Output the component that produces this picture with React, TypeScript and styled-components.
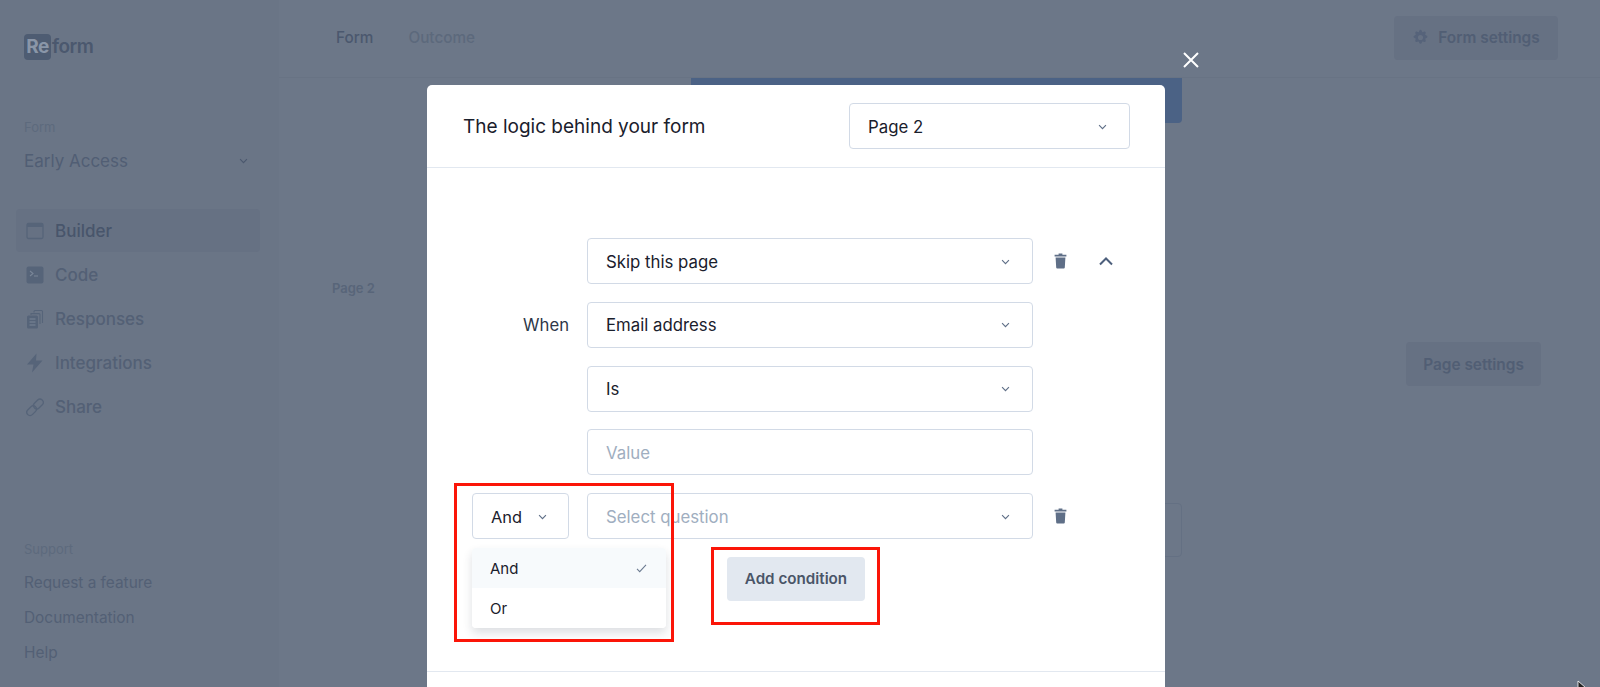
import React from 'react';
import styled, { createGlobalStyle } from 'styled-components';

const GlobalStyle = createGlobalStyle`
  html, body {
    margin: 0;
    padding: 0;
    height: 100%;
    overflow: hidden;
    background: #6c7788;
    font-family: Inter, "Liberation Sans", sans-serif;
  }
  * { box-sizing: border-box; }
`;

const Shell = styled.div`
  display: flex;
  width: 1600px;
  height: 687px;
  overflow: hidden;
  color: #4b586e;
`;

const Sidebar = styled.aside`
  display: flex;
  flex-direction: column;
  width: 279px;
  height: 687px;
  padding: 33px 19px 0 16px;
  background: #6a7586;
`;

const Logo = styled.div`
  display: flex;
  align-items: center;
  height: 27px;
  margin-left: 8px;
  font-size: 19px;
  font-weight: 600;
  letter-spacing: -0.5px;
  color: #4b586e;
`;

const LogoMark = styled.span`
  display: flex;
  align-items: center;
  justify-content: center;
  width: 27px;
  height: 26px;
  margin-right: 1px;
  border-radius: 4px;
  background: #4e5c72;
  color: #8a96a8;
  font-weight: 700;
`;

const SideLabel = styled.div<{ $top: number; $bottom?: number }>`
  margin: ${(p) => p.$top}px 0 ${(p) => p.$bottom ?? 0}px 8px;
  font-size: 13px;
  line-height: 16px;
  color: #5d6a7d;
`;

const FormPicker = styled.div`
  display: flex;
  align-items: center;
  justify-content: space-between;
  height: 24px;
  margin: 14px 12px 0 8px;
  font-size: 17px;
  color: #515e74;
`;

const NavList = styled.nav`
  display: flex;
  flex-direction: column;
  gap: 1px;
  margin-top: 36px;
`;

const NavItem = styled.div<{ $active?: boolean }>`
  display: flex;
  align-items: center;
  gap: 11px;
  height: 43px;
  padding-left: 10px;
  border-radius: 4px;
  font-size: 17px;
  font-weight: 500;
  background: ${(p) => (p.$active ? '#667183' : 'transparent')};
  color: ${(p) => (p.$active ? '#48556b' : '#536075')};
`;

const NavIcon = styled.svg`
  flex: none;
  width: 18px;
  height: 20px;
  color: #566479;
`;

const SupportBlock = styled.div`
  display: flex;
  flex-direction: column;
  margin-top: auto;
  padding-bottom: 17px;
`;

const SupportLink = styled.div`
  height: 35px;
  margin-left: 8px;
  font-size: 15.4px;
  line-height: 35px;
  color: #536075;
`;

const Main = styled.main`
  flex: 1;
  display: flex;
  flex-direction: column;
  min-width: 0;
`;

const TopBar = styled.header`
  display: flex;
  align-items: center;
  gap: 35px;
  height: 78px;
  padding: 0 42px 2px 57px;
  border-bottom: 1px solid #687384;
  font-size: 15.3px;
  font-weight: 500;
`;

const Tab = styled.span<{ $muted?: boolean }>`
  color: ${(p) => (p.$muted ? '#5c697c' : '#4b586e')};
`;

const GhostButton = styled.div`
  display: flex;
  align-items: center;
  justify-content: center;
  gap: 9px;
  height: 44px;
  border-radius: 4px;
  background: #667183;
  color: #515e74;
  font-size: 15.4px;
  font-weight: 600;
`;

const FormSettings = styled(GhostButton)`
  width: 164px;
  margin-left: auto;
`;

const Canvas = styled.section`
  display: flex;
  flex-direction: column;
  padding: 0 59px 0 53px;
`;

const BlueBar = styled.div`
  width: 491px;
  height: 45px;
  margin-left: 359px;
  border-radius: 0 0 4px 4px;
  background: #4b6285;
`;

const PageRow = styled.div`
  display: flex;
  align-items: flex-start;
  justify-content: space-between;
  margin-top: 156px;
`;

const PageLabel = styled.div`
  font-size: 13px;
  font-weight: 600;
  line-height: 18px;
  color: #586579;
`;

const PageSettings = styled(GhostButton)`
  width: 135px;
  margin-top: 63px;
`;

const OutlineBox = styled.div`
  width: 491px;
  height: 54px;
  margin: 117px 0 0 359px;
  border: 1px solid #647083;
  border-radius: 4px;
`;

const Overlay = styled.div`
  position: fixed;
  inset: 0;
  display: flex;
  justify-content: center;
  padding: 85px 8px 0 0;
  overflow: hidden;
`;

const Modal = styled.div`
  position: relative;
  width: 738px;
  height: 640px;
  border-radius: 5px 5px 0 0;
  background: #fff;
  color: #1a202c;
`;

const CloseButton = styled.svg`
  position: absolute;
  top: -33px;
  right: -34px;
  width: 16px;
  height: 16px;
  color: #fff;
`;

const ModalHeader = styled.div`
  display: flex;
  align-items: center;
  justify-content: space-between;
  height: 83px;
  padding: 0 35px 0 36px;
  border-bottom: 1px solid #e2e8f0;
`;

const Title = styled.h2`
  margin: 0;
  padding-top: 1px;
  font-size: 19px;
  font-weight: 400;
  color: #1a202c;
`;

const Select = styled.div<{ $placeholder?: boolean; $width?: number }>`
  display: flex;
  align-items: center;
  justify-content: space-between;
  width: ${(p) => (p.$width ? `${p.$width}px` : '100%')};
  height: 46px;
  padding: 1px 22px 0 18px;
  border: 1px solid #d2dae6;
  border-radius: 4px;
  background: #fff;
  font-size: 16.8px;
  color: ${(p) => (p.$placeholder ? '#a0aec0' : '#1a202c')};
`;

const Chevron = styled.svg<{ $tone?: string }>`
  flex: none;
  width: 9px;
  height: 6px;
  color: ${(p) => p.$tone ?? '#5f6f87'};
`;

const RuleGrid = styled.div`
  display: grid;
  grid-template-columns: 97px 446px auto;
  column-gap: 18px;
  row-gap: 17.75px;
  align-items: center;
  margin: 70px 0 0 45px;
`;

const WhenLabel = styled.div`
  padding-top: 1px;
  text-align: right;
  font-size: 16.7px;
  color: #2d3748;
`;

const Actions = styled.div`
  display: flex;
  align-items: center;
  gap: 32px;
  padding-left: 3px;
`;

const TrashIcon = styled.svg`
  width: 13px;
  height: 16px;
  color: #5f6f87;
`;

const CollapseIcon = styled.svg`
  width: 14px;
  height: 9px;
  color: #4d5f7c;
`;

const ConjunctionWrap = styled.div`
  position: relative;
`;

const ConjunctionSelect = styled(Select)`
  gap: 12px;
  padding-right: 21px;
  font-size: 16.4px;
`;

const Menu = styled.div`
  position: absolute;
  top: 55px;
  left: 0;
  z-index: 2;
  width: 194px;
  border-radius: 4px;
  background: #fff;
  box-shadow: 0 5px 10px rgba(45, 55, 72, 0.16);
`;

const MenuItem = styled.div<{ $selected?: boolean }>`
  display: flex;
  align-items: center;
  justify-content: space-between;
  height: 40px;
  padding: 0 19px 0 18px;
  border-radius: ${(p) => (p.$selected ? '4px 4px 0 0' : '0 0 4px 4px')};
  background: ${(p) => (p.$selected ? '#f7fafc' : '#fff')};
  font-size: 15px;
  color: #1a202c;
`;

const Check = styled.svg`
  width: 11px;
  height: 9px;
  color: #6b7a90;
`;

const AddRow = styled.div`
  display: flex;
  margin: 17.5px 0 0 300px;
`;

const AddButton = styled.div`
  display: flex;
  align-items: center;
  justify-content: center;
  width: 138px;
  height: 44px;
  border-radius: 4px;
  background: #e2e8f0;
  color: #4a5568;
  font-size: 15.2px;
  font-weight: 600;
`;

const FooterRule = styled.div`
  height: 1px;
  margin-top: 70px;
  background: #e2e8f0;
`;

const Callout = styled.div<{ $left: number; $top: number; $w: number; $h: number }>`
  position: absolute;
  z-index: 3;
  left: ${(p) => p.$left}px;
  top: ${(p) => p.$top}px;
  width: ${(p) => p.$w}px;
  height: ${(p) => p.$h}px;
  border: 3px solid #fb1508;
  pointer-events: none;
`;

const Pointer = styled.svg`
  position: fixed;
  left: 1577px;
  top: 680px;
  width: 10px;
  height: 14px;
`;

const Caret = ({ tone }: { tone?: string }) => (
  <Chevron $tone={tone} viewBox="0 0 10 7" fill="none" stroke="currentColor" strokeWidth="1.3">
    <path d="M1 1.2 5 5.4 9 1.2" />
  </Chevron>
);

const Trash = () => (
  <TrashIcon viewBox="0 0 13 16" fill="currentColor">
    <path d="M4.6 0.6h3.8v1.2h4v1.7H0.6V1.8h4z" />
    <path d="M1.6 4.6h9.8l-.6 10a1 1 0 0 1-1 .9H3.2a1 1 0 0 1-1-.9z" />
  </TrashIcon>
);

const navItems = [
  {
    label: 'Builder',
    icon: (
      <>
        <rect x="1" y="2.5" width="16" height="15" rx="1.5" fill="none" stroke="currentColor" strokeWidth="1.3" />
        <path d="M1 3.5a1 1 0 0 1 1-1h14a1 1 0 0 1 1 1v2.5H1z" fill="currentColor" />
      </>
    ),
  },
  {
    label: 'Code',
    icon: (
      <>
        <rect x="0.5" y="1.5" width="17" height="17" rx="2" fill="currentColor" />
        <path d="M4 6l3 2.5L4 11M8 11h4" fill="none" stroke="#7a8698" strokeWidth="1.1" />
      </>
    ),
  },
  {
    label: 'Responses',
    icon: (
      <>
        <path d="M8 3.5V2.5a1 1 0 0 1 1-1h6.5a1 1 0 0 1 1 1V14" fill="none" stroke="currentColor" strokeWidth="1.1" />
        <path d="M5 6V4.6h8a1 1 0 0 1 1 1V15" fill="none" stroke="currentColor" strokeWidth="1.1" />
        <rect x="1" y="6.5" width="11" height="13" rx="1.5" fill="currentColor" />
        <path d="M3.5 10h6M3.5 13h6M3.5 16h6" stroke="#7a8698" strokeWidth="1" />
      </>
    ),
  },
  {
    label: 'Integrations',
    icon: <path d="M10.5 0.5 1 11.5h6.5L6 19.5l10.5-12H10z" fill="currentColor" />,
  },
  {
    label: 'Share',
    icon: (
      <g fill="none" stroke="currentColor" strokeWidth="1.3" transform="rotate(-45 9 10)">
        <rect x="-1.5" y="7" width="11" height="6.5" rx="3.2" />
        <rect x="8" y="7" width="11" height="6.5" rx="3.2" />
      </g>
    ),
  },
];

const App = () => (
  <>
    <GlobalStyle />
    <Shell>
      <Sidebar>
        <Logo>
          <LogoMark>Re</LogoMark>
          form
        </Logo>
        <SideLabel $top={59}>Form</SideLabel>
        <FormPicker>
          Early Access
          <Caret tone="#4b586e" />
        </FormPicker>
        <NavList>
          {navItems.map((item, i) => (
            <NavItem key={item.label} $active={i === 0}>
              <NavIcon viewBox="0 0 18 20">{item.icon}</NavIcon>
              {item.label}
            </NavItem>
          ))}
        </NavList>
        <SupportBlock>
          <SideLabel $top={0} $bottom={8}>Support</SideLabel>
          <SupportLink>Request a feature</SupportLink>
          <SupportLink>Documentation</SupportLink>
          <SupportLink>Help</SupportLink>
        </SupportBlock>
      </Sidebar>
      <Main>
        <TopBar>
          <Tab>Form</Tab>
          <Tab $muted>Outcome</Tab>
          <FormSettings>
            <svg width="17" height="17" viewBox="0 0 20 20" fill="#56637a">
              <path
                fillRule="evenodd"
                d="M11.5 1.3c-.4-1.700-2.600-1.700-3 0a1.500 1.500 0 0 1-2.300 1c-1.500-1-3 .6-2.100 2.100a1.500 1.500 0 0 1-1 2.300c-1.700.4-1.700 2.600 0 3a1.500 1.500 0 0 1 1 2.300c-1 1.500.6 3 2.100 2.100a1.500 1.500 0 0 1 2.300 1c.4 1.700 2.600 1.700 3 0a1.500 1.500 0 0 1 2.300-1c1.500 1 3-.6 2.100-2.100a1.500 1.500 0 0 1 1-2.300c1.700-.4 1.700-2.600 0-3a1.500 1.500 0 0 1-1-2.300c1-1.500-.6-3-2.100-2.100a1.500 1.500 0 0 1-2.300-1zM10 12a3 3 0 1 0 0-6 3 3 0 0 0 0 6z"
                transform="translate(0 1)"
              />
            </svg>
            Form settings
          </FormSettings>
        </TopBar>
        <Canvas>
          <BlueBar />
          <PageRow>
            <PageLabel>Page 2</PageLabel>
            <PageSettings>Page settings</PageSettings>
          </PageRow>
          <OutlineBox />
        </Canvas>
      </Main>
    </Shell>
    <Overlay>
      <Modal>
        <CloseButton viewBox="0 0 16 16" fill="none" stroke="currentColor" strokeWidth="2">
          <path d="M1 1l14 14M15 1 1 15" />
        </CloseButton>
        <ModalHeader>
          <Title>The logic behind your form</Title>
          <Select $width={281}>
            Page 2
            <Caret />
          </Select>
        </ModalHeader>
        <RuleGrid>
          <span />
          <Select>
            Skip this page
            <Caret />
          </Select>
          <Actions>
            <Trash />
            <CollapseIcon viewBox="0 0 14 9" fill="none" stroke="currentColor" strokeWidth="2">
              <path d="M1 7.5 7 1.5l6 6" />
            </CollapseIcon>
          </Actions>
          <WhenLabel>When</WhenLabel>
          <Select>
            Email address
            <Caret />
          </Select>
          <span />
          <span />
          <Select>
            Is
            <Caret />
          </Select>
          <span />
          <span />
          <Select $placeholder>Value</Select>
          <span />
          <ConjunctionWrap>
            <ConjunctionSelect>
              And
              <Caret />
            </ConjunctionSelect>
            <Menu>
              <MenuItem $selected>
                And
                <Check viewBox="0 0 12 10" fill="none" stroke="currentColor" strokeWidth="1.2">
                  <path d="M1 5.500 4 8.500 11 1" />
                </Check>
              </MenuItem>
              <MenuItem>Or</MenuItem>
            </Menu>
          </ConjunctionWrap>
          <Select $placeholder>
            Select question
            <Caret />
          </Select>
          <Actions>
            <Trash />
          </Actions>
        </RuleGrid>
        <AddRow>
          <AddButton>Add condition</AddButton>
        </AddRow>
        <FooterRule />
        <Callout $left={27} $top={398} $w={220} $h={159} />
        <Callout $left={284} $top={462} $w={169} $h={78} />
      </Modal>
    </Overlay>
    <Pointer viewBox="0 0 10 14">
      <path d="M1 1v10l2.500-2.300L5.500 13l2-1-2-4H9z" fill="#222" stroke="#fff" strokeWidth="0.8" />
    </Pointer>
  </>
);

export default App;
